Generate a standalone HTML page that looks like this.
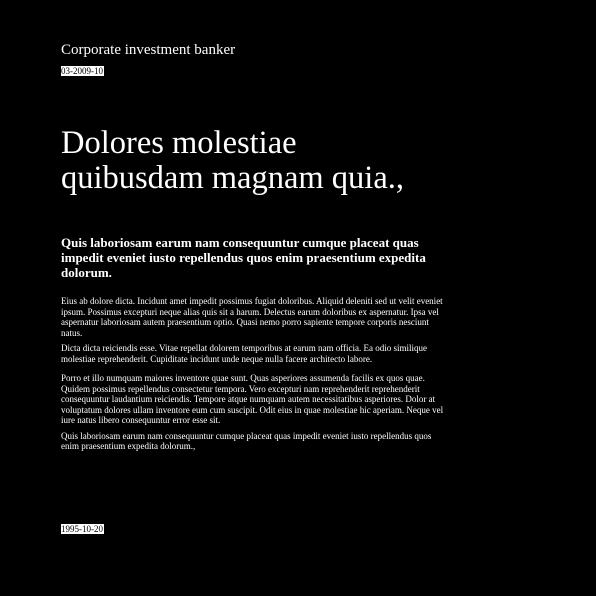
<!DOCTYPE html>
<html><head><meta charset="utf-8"><style>
html,body{margin:0;padding:0;background:#000;width:596px;height:596px;overflow:hidden}
body{font-family:"Liberation Serif",serif;color:#fff;position:relative}
.a{position:absolute;left:61px;margin:0}
.t{top:41px;font-size:15px;line-height:18px}
.d{font-size:9px;line-height:10px;background:#fff;color:#000;padding:0 1px 0 0;left:61px}
h1{font-weight:normal;font-size:32.5px;line-height:35px;top:126px;width:360px}
h2{font-size:13px;line-height:15px;top:235px;width:380px;font-weight:bold}
.b{top:296px;width:388px;font-size:9px;line-height:10.5px}
.b p{margin:0 0 5px}
</style></head><body>
<div class="a t">Corporate investment banker</div>
<span class="a d" style="top:66px">03-2009-10</span>
<h1 class="a">Dolores molestiae quibusdam magnam quia.,</h1>
<h2 class="a">Quis laboriosam earum nam consequuntur cumque placeat quas impedit eveniet iusto repellendus quos enim praesentium expedita dolorum.</h2>
<div class="a b">
<p>Eius ab dolore dicta. Incidunt amet impedit possimus fugiat doloribus. Aliquid deleniti sed ut velit eveniet ipsum. Possimus excepturi neque alias quis sit a harum. Delectus earum doloribus ex aspernatur. Ipsa vel aspernatur laboriosam autem praesentium optio. Quasi nemo porro sapiente tempore corporis nesciunt natus.</p>
<p>Dicta dicta reiciendis esse. Vitae repellat dolorem temporibus at earum nam officia. Ea odio similique molestiae reprehenderit. Cupiditate incidunt unde neque nulla facere architecto labore.</p>
<p style="margin-top:9px">Porro et illo numquam maiores inventore quae sunt. Quas asperiores assumenda facilis ex quos quae. Quidem possimus repellendus consectetur tempora. Vero excepturi nam reprehenderit reprehenderit consequuntur laudantium reiciendis. Tempore atque numquam autem necessitatibus asperiores. Dolor at voluptatum dolores ullam inventore eum cum suscipit. Odit eius in quae molestiae hic aperiam. Neque vel iure natus libero consequuntur error esse sit.</p>
<p>Quis laboriosam earum nam consequuntur cumque placeat quas impedit eveniet iusto repellendus quos enim praesentium expedita dolorum.,</p>
</div>
<span class="a d" style="top:524px">1995-10-20</span>
</body></html>
